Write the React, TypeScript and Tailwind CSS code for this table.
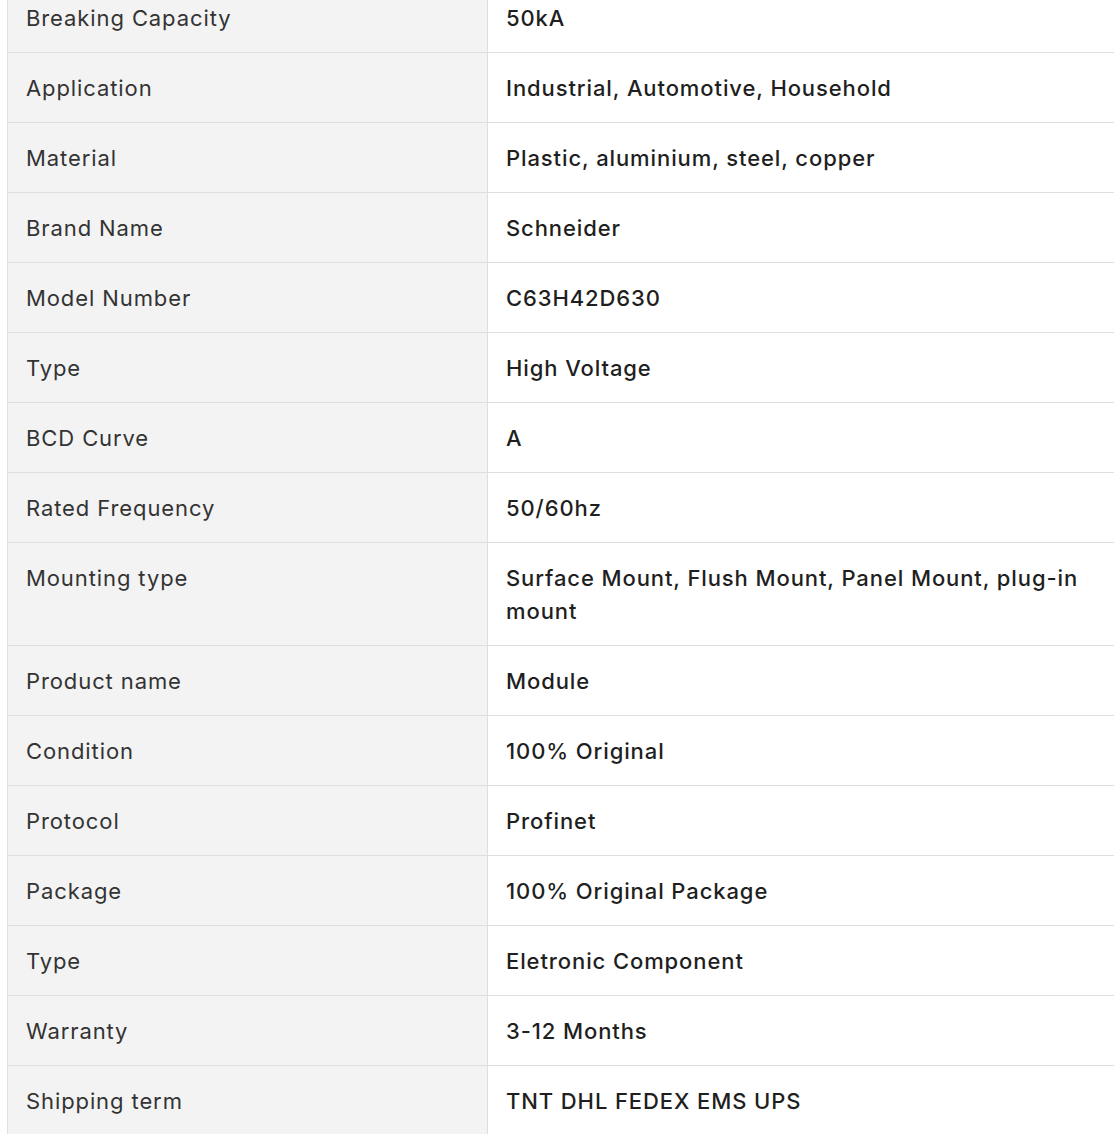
const specs: [string, string][] = [
  ["Breaking Capacity", "50kA"],
  ["Application", "Industrial, Automotive, Household"],
  ["Material", "Plastic, aluminium, steel, copper"],
  ["Brand Name", "Schneider"],
  ["Model Number", "C63H42D630"],
  ["Type", "High Voltage"],
  ["BCD Curve", "A"],
  ["Rated Frequency", "50/60hz"],
  ["Mounting type", "Surface Mount, Flush Mount, Panel Mount, plug-in mount"],
  ["Product name", "Module"],
  ["Condition", "100% Original"],
  ["Protocol", "Profinet"],
  ["Package", "100% Original Package"],
  ["Type", "Eletronic Component"],
  ["Warranty", "3-12 Months"],
  ["Shipping term", "TNT DHL FEDEX EMS UPS"],
];

const App = () => {
  return (
    <div className="h-[1134px] overflow-hidden bg-white pl-[7px] font-['Inter',sans-serif] text-[22px] leading-[33px] tracking-[0.9px]">
      <div className="-mt-[17px] border-l border-[#e0e0e0]">
        {specs.map(([label, value], i) => (
          <div
            key={i}
            className="grid grid-cols-[480px_1fr] border-b border-[#dedede]"
          >
            <div className="bg-[#f3f3f3] pl-[18px] pr-[19px] pt-[19px] pb-[17px] text-[#333333] border-r border-[#dedede]">
              {label}
            </div>
            <div className="pl-[18px] pr-[19px] pt-[19px] pb-[17px] font-medium text-[#1f1f1f]">
              {value}
            </div>
          </div>
        ))}
      </div>
    </div>
  );
};

export default App;
